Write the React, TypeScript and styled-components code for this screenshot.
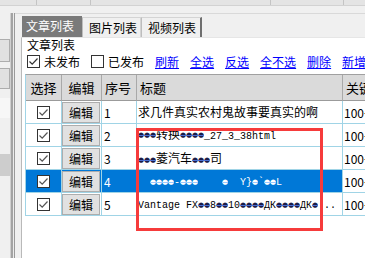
import React, { FC, ReactNode } from 'react';
import styled, { createGlobalStyle, css } from 'styled-components';

const GlobalStyle = createGlobalStyle`
    html, body {
        margin: 0;
        padding: 0;
        background: #f0f0f0;
    }
    body {
        font-family: 'Noto Sans CJK SC', 'Noto Sans', sans-serif;
        font-size: 12px;
        color: #000;
    }
`;

const Page = styled.div`
    position: relative;
    width: 365px;
    height: 258px;
    overflow: hidden;
    background: #f0f0f0;
`;

const TopStrip = styled.div`
    display: flex;
    height: 5px;
    background: #e4e4e4;
    border-bottom: 1px solid #d2d2d2;
`;

const StripCell = styled.div<{ $w: number }>`
    width: ${(p) => p.$w}px;
    flex-shrink: 0;
    border-right: 1px solid #c4c4c4;
`;

const Body = styled.div`
    display: flex;
    margin-top: 7px;
    height: 245px;
`;

const LeftRail = styled.div`
    display: flex;
    width: 15px;
    flex-shrink: 0;
`;

const RailButtons = styled.div`
    display: flex;
    flex-direction: column;
    width: 11px;
    padding-top: 26px;
    border-right: 1px solid #d0d0d0;
    box-sizing: border-box;
`;

const RailButton = styled.div<{ $h: number; $gap: number; $flat?: boolean }>`
    height: ${(p) => p.$h}px;
    margin-top: ${(p) => p.$gap}px;
    margin-left: -1px;
    width: 11px;
    box-sizing: border-box;
    ${(p) =>
        p.$flat
            ? css`
                  background: #cdcdcd;
              `
            : css`
                  background: #e1e1e1;
                  border: 1px solid #adadad;
              `}
`;

const RailLight = styled.div`
    height: 20px;
    margin-top: 9px;
    background: #f7f7f7;
`;

const Splitter = styled.div`
    width: 4px;
    box-sizing: border-box;
    border-left: 2px solid #a3a3a3;
    border-right: 1px solid #9a9a9a;
    background: #ececec;
`;

const MainPane = styled.div`
    flex: 1;
    display: flex;
    flex-direction: column;
    border-top: 1px solid #d9d9d9;
    padding: 2px 0 0 6px;
`;

const TabStrip = styled.div`
    display: flex;
    height: 21px;
    padding-left: 1px;
`;

const Tab = styled.div<{ $active?: boolean; $w: number }>`
    width: ${(p) => p.$w}px;
    box-sizing: border-box;
    padding-left: 4px;
    line-height: 20px;
    white-space: nowrap;
    ${(p) =>
        p.$active
            ? css`
                  background: #7a7a7a;
                  color: #fff;
              `
            : css`
                  margin-top: 1px;
                  padding-left: 6px;
                  background: #f0f0f0;
                  border: 1px solid #d4d4d4;
                  border-bottom: none;
                  border-left-color: #bdbdbd;
              `}
    &:last-child {
        border-right: 2px solid #6f6f6f;
    }
`;

const TabPage = styled.div`
    flex: 1;
    background: #fff;
    border-left: 1px solid #b9b9b9;
    border-top: 1px solid #e6e6e6;
`;

const GroupLabel = styled.div`
    padding-left: 5px;
    line-height: 14px;
`;

const OptionRow = styled.div`
    display: flex;
    align-items: center;
    height: 18px;
    padding-left: 5px;
    white-space: nowrap;
`;

const Option = styled.label`
    display: flex;
    align-items: center;
    gap: 4px;
    margin-right: 11px;
`;

const LinkButton = styled.a`
    color: #0000ff;
    text-decoration: underline;
    margin-right: 11px;
    cursor: pointer;
`;

const Box = styled.span`
    display: inline-flex;
    align-items: center;
    justify-content: center;
    width: 13px;
    height: 13px;
    box-sizing: border-box;
    border: 1px solid #333;
    background: #fff;
    flex-shrink: 0;
    svg {
        display: block;
    }
`;

const Grid = styled.div`
    display: grid;
    grid-template-columns: 36px 40px 35px 206px 80px;
    margin: 4px 0 0 3px;
    border-top: 1px solid #a0a0a0;
    border-left: 1px solid #a0d4e6;
    width: max-content;
`;

const HeadCell = styled.div<{ $center?: boolean }>`
    height: 26px;
    box-sizing: border-box;
    display: flex;
    align-items: center;
    justify-content: ${(p) => (p.$center ? 'center' : 'flex-start')};
    padding-left: ${(p) => (p.$center ? 0 : 3)}px;
    background: #dadada;
    border-right: 1px solid #a9a9a9;
    border-bottom: 1px solid #9b9b9b;
    font-size: 13px;
    white-space: nowrap;
    overflow: hidden;
`;

const Cell = styled.div<{ $sel?: boolean; $center?: boolean; $pad?: number }>`
    height: 23px;
    box-sizing: border-box;
    display: flex;
    align-items: center;
    justify-content: ${(p) => (p.$center ? 'center' : 'flex-start')};
    padding-left: ${(p) => p.$pad ?? 0}px;
    border-right: 1px solid #a0d4e6;
    border-bottom: 1px solid #a0d4e6;
    background: ${(p) => (p.$sel ? '#0078d7' : '#fff')};
    color: ${(p) => (p.$sel ? '#fff' : '#000')};
    white-space: nowrap;
    overflow: hidden;
`;

const ButtonCell = styled(Cell)`
    align-items: flex-start;
    padding-top: 1px;
`;

const EditButton = styled.button`
    width: 38px;
    height: 21px;
    padding: 0;
    box-sizing: border-box;
    background: #e1e1e1;
    border: 1px solid #adadad;
    font-family: inherit;
    font-size: 12px;
    color: #000;
`;

const TitleText = styled.span`
    display: block;
    white-space: pre;
    line-height: 16px;
`;

const Mono = styled.span`
    font-family: 'Liberation Mono', monospace;
    font-size: 10px;
    letter-spacing: 0;
`;

// garbled bytes shown by the grid as small beads on a line, 6px apart
const Dot = styled.span<{ $sel?: boolean }>`
    display: inline-block;
    width: 6px;
    overflow: hidden;
    text-align: center;
    font-family: 'DejaVu Sans', sans-serif;
    font-size: 7px;
    line-height: 8px;
    vertical-align: middle;
    color: ${(p) => (p.$sel ? '#ffffff' : '#1c1c48')};
    text-decoration: line-through;
    text-decoration-color: ${(p) => (p.$sel ? '#9cc9ff' : '#4a6fd0')};
`;

const Highlight = styled.div`
    position: absolute;
    left: 136px;
    top: 128px;
    width: 187px;
    height: 103px;
    box-sizing: border-box;
    border: 3px solid #f63b3b;
    pointer-events: none;
`;

const Check: FC<{ color?: string }> = ({ color = '#444' }) => (
    <svg width="11" height="11" viewBox="0 0 11 11">
        <path d="M1.5 5.5 L4.2 8.2 L9.5 2.5" fill="none" stroke={color} strokeWidth="1.2" />
    </svg>
);

const d = (n: number, sel?: boolean) =>
    Array.from({ length: n }, (_, i) => (
        <Dot key={i} $sel={sel}>
            ●
        </Dot>
    ));

type Row = { no: string; sel?: boolean; title: ReactNode };

const rows: Row[] = [
    { no: '1', title: '求几件真实农村鬼故事要真实的啊' },
    {
        no: '2',
        title: (
            <>
                {d(3)}转换{d(4)}<Mono>_27_3_38html</Mono>
            </>
        ),
    },
    {
        no: '3',
        title: (
            <>
                {d(3)}菱汽车{d(3)}司
            </>
        ),
    },
    {
        no: '4',
        sel: true,
        title: (
            <Mono>
                {'  '}
                {d(4, true)}-{d(3, true)}
                {'    '}
                {d(1, true)}
                {'  Y}'}
                {d(1, true)}`{d(2, true)}L
            </Mono>
        ),
    },
    {
        no: '5',
        title: (
            <Mono>
                Vantage FX{d(2)}8{d(2)}10{d(4)}ДК{d(4)}ДК{d(1)} ..
            </Mono>
        ),
    },
];

const links = ['刷新', '全选', '反选', '全不选', '删除', '新增'];

const App: FC = () => (
    <Page>
        <GlobalStyle />
        <TopStrip>
            <StripCell $w={36} />
            <StripCell $w={53} />
            <StripCell $w={179} />
            <StripCell $w={72} />
        </TopStrip>
        <Body>
            <LeftRail>
                <RailButtons>
                    <RailButton $h={23} $gap={0} />
                    <RailButton $h={21} $gap={6} />
                    <RailLight />
                    <RailButton $h={22} $gap={36} $flat />
                </RailButtons>
                <Splitter />
            </LeftRail>
            <MainPane>
                <TabStrip>
                    <Tab $active $w={60}>
                        文章列表
                    </Tab>
                    <Tab $w={59}>图片列表</Tab>
                    <Tab $w={61}>视频列表</Tab>
                </TabStrip>
                <TabPage>
                    <GroupLabel>文章列表</GroupLabel>
                    <OptionRow>
                        <Option>
                            <Box>
                                <Check color="#333" />
                            </Box>
                            未发布
                        </Option>
                        <Option>
                            <Box />
                            已发布
                        </Option>
                        {links.map((l) => (
                            <LinkButton key={l}>{l}</LinkButton>
                        ))}
                    </OptionRow>
                    <Grid>
                        <HeadCell $center>选择</HeadCell>
                        <HeadCell $center>编辑</HeadCell>
                        <HeadCell>序号</HeadCell>
                        <HeadCell>标题</HeadCell>
                        <HeadCell>关键字</HeadCell>
                        {rows.map((r) => (
                            <React.Fragment key={r.no}>
                                <Cell $sel={r.sel} $center>
                                    <Box>
                                        <Check color="#555" />
                                    </Box>
                                </Cell>
                                <ButtonCell $sel={r.sel}>
                                    <EditButton>编辑</EditButton>
                                </ButtonCell>
                                <Cell $sel={r.sel} $pad={2}>
                                    {r.no}
                                </Cell>
                                <Cell $sel={r.sel} $pad={1}>
                                    <TitleText>{r.title}</TitleText>
                                </Cell>
                                <Cell $pad={1}>100+</Cell>
                            </React.Fragment>
                        ))}
                    </Grid>
                </TabPage>
            </MainPane>
        </Body>
        <Highlight />
    </Page>
);

export default App;
